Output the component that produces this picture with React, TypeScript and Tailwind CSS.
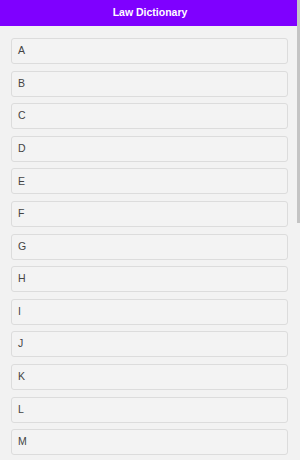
import React from "react";

const letters = "ABCDEFGHIJKLMNOPQRSTUVWXYZ".split("");

export default function App() {
  return (
    <div
      className="relative w-[300px] h-[460px] overflow-hidden bg-[#f2f2f2]"
      style={{ fontFamily: '"Liberation Sans", Arial, sans-serif' }}
    >
      <div className="w-[297px]">
        <div className="h-[26px] bg-[#7f00ff] flex items-center justify-center">
          <span className="text-white font-bold text-[10.5px] pl-[3px]">Law Dictionary</span>
        </div>
        <div className="flex flex-col gap-[6.6px] pt-[12px] pl-[11px] pr-[9px]">
          {letters.map((l) => (
            <div
              key={l}
              className="h-[26px] shrink-0 border border-[#dcdcdc] rounded-[3px] bg-[#f3f3f3] flex items-center pl-[6px] text-[10.5px] text-[#444444]"
            >
              {l}
            </div>
          ))}
        </div>
      </div>
      <div className="absolute right-0 top-0 w-[3px] h-[223px] bg-[#c4c4c4]" />
    </div>
  );
}
